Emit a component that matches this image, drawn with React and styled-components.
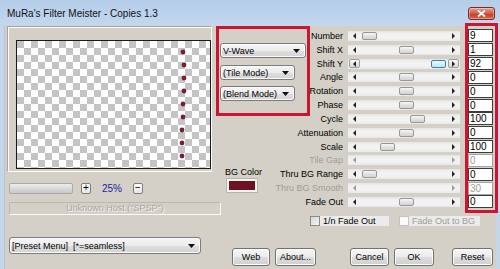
import styled, { createGlobalStyle } from "styled-components";

const GlobalStyle = createGlobalStyle`
  html, body {
    margin: 0;
    padding: 0;
  }
  body {
    width: 500px;
    height: 269px;
    overflow: hidden;
    font-family: "Liberation Sans", Arial, sans-serif;
  }
  * {
    box-sizing: border-box;
  }
`;

const Window = styled.div`
  position: relative;
  width: 500px;
  height: 269px;
  overflow: hidden;
  display: flex;
  flex-direction: column;
  background: linear-gradient(#b5cde9, #c4d7ee 26px, #c3d6ec);
`;

const TitleBar = styled.div`
  height: 26px;
  flex-shrink: 0;
  display: flex;
  align-items: center;
  padding: 1px 5px 0 7px;
  font-size: 10px;
  color: #111;
`;

const CloseButton = styled.div`
  margin-left: auto;
  margin-top: -1px;
  width: 27px;
  height: 13px;
  border: 1px solid #7a2a20;
  border-radius: 3px;
  background: linear-gradient(#e6a08e, #cf5b43 50%, #c03a22 51%, #d8674e);
  display: flex;
  align-items: center;
  justify-content: center;
  box-shadow: inset 0 0 0 1px rgba(255, 255, 255, 0.35);
`;

const Body = styled.div`
  flex: 1;
  margin: 0 4px;
  padding-left: 3px;
  background: #d4d0c8;
  display: flex;
  border-left: 1px solid #b6c4d4;
`;

/* ---------- left column ---------- */

const LeftColumn = styled.div`
  width: 212px;
  flex-shrink: 0;
  display: flex;
  flex-direction: column;
`;

const PreviewFrame = styled.div`
  margin-top: 1px;
  width: 204px;
  height: 145px;
  border: 1px solid #fbfbfb;
  box-shadow: -1px -1px 0 #a8a49c;
  padding: 12px 0 0 7px;
`;

const Checker = styled.div`
  width: 195px;
  height: 129px;
  border: 1px solid #1a1a1a;
  background: repeating-conic-gradient(#fff 0 25%, #c4c4c4 0 50%) 0 0 / 14px 14px;
  svg {
    display: block;
  }
`;

const ZoomRow = styled.div`
  margin-top: 11px;
  height: 11px;
  display: flex;
  align-items: center;
  padding-left: 1px;
`;

const ZoomSlider = styled.div`
  width: 64px;
  height: 11px;
  border: 1px solid #a9a9a9;
  border-radius: 2px;
  background: linear-gradient(#eeeeee, #d6d6d6 60%, #c9c9c9);
`;

const TinyButton = styled.div`
  margin-left: ${(p) => p.$gap}px;
  width: 10px;
  height: 11px;
  border: 1px solid #7d7d7d;
  border-radius: 2px;
  background: linear-gradient(#ffffff, #e4e4e4);
  font-size: 10px;
  line-height: 8px;
  text-align: center;
  color: #000;
`;

const Percent = styled.div`
  width: 42px;
  text-align: center;
  font-size: 10px;
  color: #1c1ca0;
`;

const HostBox = styled.div`
  margin: 8px 0 0 1px;
  width: 212px;
  height: 13px;
  border: 1px solid #fafafa;
  border-top-color: #bcb8b0;
  border-left-color: #bcb8b0;
  font-size: 9px;
  line-height: 11px;
  text-align: center;
  color: #aaa69e;
  text-shadow: 1px 1px 0 #f4f4f4;
`;

const Combo = styled.div`
  margin-top: ${(p) => p.$top || 0}px;
  margin-left: ${(p) => p.$left || 0}px;
  width: ${(p) => p.$w}px;
  height: ${(p) => p.$h || 15}px;
  border: 1px solid #7c7c7c;
  border-radius: 3px;
  background: linear-gradient(#f5f5f5, #ececec 50%, #dedede 51%, #d4d4d4);
  box-shadow: inset 0 0 0 1px #fafafa;
  display: flex;
  align-items: center;
  padding: 0 5px 0 2px;
  font-size: 9px;
  color: #000;
  white-space: nowrap;
  span {
    flex: 1;
  }
`;

/* ---------- right side ---------- */

const RightSide = styled.div`
  flex: 1;
  display: flex;
  flex-direction: column;
`;

const TopRow = styled.div`
  display: flex;
`;

const MidColumn = styled.div`
  width: 87px;
  flex-shrink: 0;
  padding-top: 17px;
  display: flex;
  flex-direction: column;
`;

const ColorLabel = styled.div`
  margin: 66px 0 0 5px;
  font-size: 9px;
  line-height: 10px;
  color: #000;
`;

const Swatch = styled.div`
  margin: 2px 0 0 7px;
  width: 30px;
  height: 13px;
  border: 2px solid #f4f4f4;
  outline: 1px solid #b8b4ac;
  background: ${(p) => p.$color};
`;

const ParamsColumn = styled.div`
  padding-top: 3px;
  display: flex;
  flex-direction: column;
`;

const ParamRow = styled.div`
  height: 13.83px;
  display: flex;
  align-items: center;
`;

const ParamLabel = styled.div`
  width: 36px;
  flex-shrink: 0;
  display: flex;
  justify-content: flex-end;
  white-space: nowrap;
  font-size: 9px;
  color: ${(p) => (p.$disabled ? "#a19d96" : "#000")};
`;

const Track = styled.div`
  position: relative;
  margin-left: 5px;
  width: 112px;
  height: 10px;
  display: flex;
  align-items: center;
  justify-content: space-between;
  padding: 0 1px;
  background: linear-gradient(#e4e4e4, #f2f2f2 30%, #f2f2f2 70%, #e8e8e8);
`;

const ArrowBox = styled.div`
  width: 11px;
  height: 9px;
  display: flex;
  align-items: center;
  justify-content: center;
  border: 1px solid ${(p) => (p.$hot ? "#9b9b9b" : "transparent")};
  border-radius: 2px;
  background: ${(p) => (p.$hot ? "linear-gradient(#f8f8f8, #dadada)" : "none")};
`;

const Thumb = styled.div`
  position: absolute;
  top: 1px;
  width: 15px;
  height: 8px;
  border: 1px solid ${(p) => (p.$hot ? "#3c7fb1" : "#979797")};
  border-radius: 2px;
  background: ${(p) =>
    p.$hot
      ? "linear-gradient(#eaf6fd, #bee6fd)"
      : "linear-gradient(#f7f7f7, #e0e0e0 55%, #d4d4d4)"};
`;

const Edit = styled.div`
  margin-left: 8px;
  width: 25px;
  height: 13px;
  border: 1px solid ${(p) => (p.$disabled ? "#a9a59e" : "#3c3c3c")};
  background: #fff;
  font-size: 10px;
  line-height: 11px;
  padding-left: 1px;
  color: ${(p) => (p.$disabled ? "#a19d96" : "#000")};
`;

const CheckRow = styled.div`
  margin-top: 7px;
  height: 10px;
  display: flex;
  align-items: center;
  padding-left: 3px;
`;

const CheckItem = styled.div`
  display: flex;
  align-items: center;
  margin-right: 10px;
  height: 10px;
`;

const CheckBox = styled.div`
  width: 10px;
  height: 10px;
  border: 1px solid ${(p) => (p.$disabled ? "#c4c4c4" : "#8a8a8a")};
  background: ${(p) =>
    p.$disabled ? "#fafafa" : "linear-gradient(135deg, #d6d6d6, #f6f6f6)"};
`;

const CheckText = styled.div`
  width: ${(p) => p.$w}px;
  height: 10px;
  padding-left: 3px;
  background: #ebebeb;
  font-size: 9px;
  line-height: 10px;
  white-space: nowrap;
  color: ${(p) => (p.$disabled ? "#a19d96" : "#000")};
`;

const ButtonRow = styled.div`
  margin-top: 22px;
  padding-left: 12px;
  display: flex;
`;

const Button = styled.div`
  margin-left: ${(p) => p.$gap || 0}px;
  width: ${(p) => p.$w}px;
  height: 18px;
  border: 1px solid #727272;
  border-radius: 3px;
  background: linear-gradient(#f6f6f6, #ebebeb 50%, #dddddd 51%, #d0d0d0);
  box-shadow: inset 0 0 0 1px #fbfbfb;
  display: flex;
  align-items: center;
  justify-content: center;
  font-size: 9px;
  color: #000;
`;

const Annotation = styled.div`
  position: absolute;
  left: ${(p) => p.$x}px;
  top: ${(p) => p.$y}px;
  width: ${(p) => p.$w}px;
  height: ${(p) => p.$h}px;
  border: 3px solid #cc1530;
  pointer-events: none;
`;

const params = [
  { label: "Number", value: "9", pos: 14 },
  { label: "Shift X", value: "1", pos: 51 },
  { label: "Shift Y", value: "92", pos: 83, hot: true },
  { label: "Angle", value: "0", pos: 51 },
  { label: "Rotation", value: "0", pos: 51 },
  { label: "Phase", value: "0", pos: 51 },
  { label: "Cycle", value: "100", pos: 62 },
  { label: "Attenuation", value: "0", pos: 51 },
  { label: "Scale", value: "100", pos: 32 },
  { label: "Tile Gap", value: "0", disabled: true },
  { label: "Thru BG Range", value: "0", pos: 14 },
  { label: "Thru BG Smooth", value: "30", disabled: true },
  { label: "Fade Out", value: "0", pos: 51 },
];

const dots = [166, 167, 167, 167, 166, 166, 165, 165, 165];

function Arrow({ dir, hot, disabled }) {
  const pts = dir === "left" ? "3,0 3,6 0,3" : "0,0 0,6 3,3";
  return (
    <ArrowBox $hot={hot}>
      <svg width="4" height="6" viewBox="0 0 4 6">
        <polygon points={pts} fill={disabled ? "#9a9a9a" : "#222"} />
      </svg>
    </ArrowBox>
  );
}

function DownArrow() {
  return (
    <svg width="7" height="4" viewBox="0 0 7 4">
      <polygon points="0,0 7,0 3.5,4" fill="#111" />
    </svg>
  );
}

function Param({ label, value, pos, hot, disabled }) {
  return (
    <ParamRow>
      <ParamLabel $disabled={disabled}>{label}</ParamLabel>
      <Track>
        <Arrow dir="left" hot={hot} disabled={disabled} />
        {!disabled && <Thumb $hot={hot} style={{ left: pos }} />}
        <Arrow dir="right" hot={hot} disabled={disabled} />
      </Track>
      <Edit $disabled={disabled}>{value}</Edit>
    </ParamRow>
  );
}

export default function App() {
  return (
    <Window>
      <GlobalStyle />
      <TitleBar>
        MuRa's Filter Meister - Copies 1.3
        <CloseButton>
          <svg width="9" height="7" viewBox="0 0 9 7">
            <path d="M1 0.5 L8 6.5 M8 0.5 L1 6.5" stroke="#fff" strokeWidth="1.8" />
          </svg>
        </CloseButton>
      </TitleBar>
      <Body>
        <LeftColumn>
          <PreviewFrame>
            <Checker>
              <svg width="193" height="127" viewBox="0 0 193 127">
                {dots.map((x, i) => (
                  <circle key={i} cx={x} cy={11 + 13 * i} r="2.4" fill="#7a1f30" />
                ))}
              </svg>
            </Checker>
          </PreviewFrame>
          <ZoomRow>
            <ZoomSlider />
            <TinyButton $gap={8}>+</TinyButton>
            <Percent>25%</Percent>
            <TinyButton $gap={0}>−</TinyButton>
          </ZoomRow>
          <HostBox>Unknown Host ("SPSP")</HostBox>
          <Combo $top={22} $left={1} $w={192} $h={17}>
            <span>[Preset Menu]&nbsp; [*=seamless]</span>
            <DownArrow />
          </Combo>
        </LeftColumn>
        <RightSide>
          <TopRow>
            <MidColumn>
              <Combo $w={86}>
                <span>V-Wave</span>
                <DownArrow />
              </Combo>
              <Combo $top={7} $w={75}>
                <span>(Tile Mode)</span>
                <DownArrow />
              </Combo>
              <Combo $top={6} $w={75}>
                <span>(Blend Mode)</span>
                <DownArrow />
              </Combo>
              <ColorLabel>BG Color</ColorLabel>
              <Swatch $color="#6e1222" />
            </MidColumn>
            <ParamsColumn>
              {params.map((p) => (
                <Param key={p.label} {...p} />
              ))}
              <CheckRow>
                <CheckItem>
                  <CheckBox />
                  <CheckText $w={69}>1/n Fade Out</CheckText>
                </CheckItem>
                <CheckItem>
                  <CheckBox $disabled />
                  <CheckText $w={71} $disabled>
                    Fade Out to BG
                  </CheckText>
                </CheckItem>
              </CheckRow>
            </ParamsColumn>
          </TopRow>
          <ButtonRow>
            <Button $w={38}>Web</Button>
            <Button $w={41} $gap={5}>About...</Button>
            <Button $w={39} $gap={34}>Cancel</Button>
            <Button $w={40} $gap={5}>OK</Button>
            <Button $w={41} $gap={18}>Reset</Button>
          </ButtonRow>
        </RightSide>
      </Body>
      <Annotation $x={216} $y={26} $w={94} $h={90} />
      <Annotation $x={465} $y={23} $w={33} $h={190} />
    </Window>
  );
}
